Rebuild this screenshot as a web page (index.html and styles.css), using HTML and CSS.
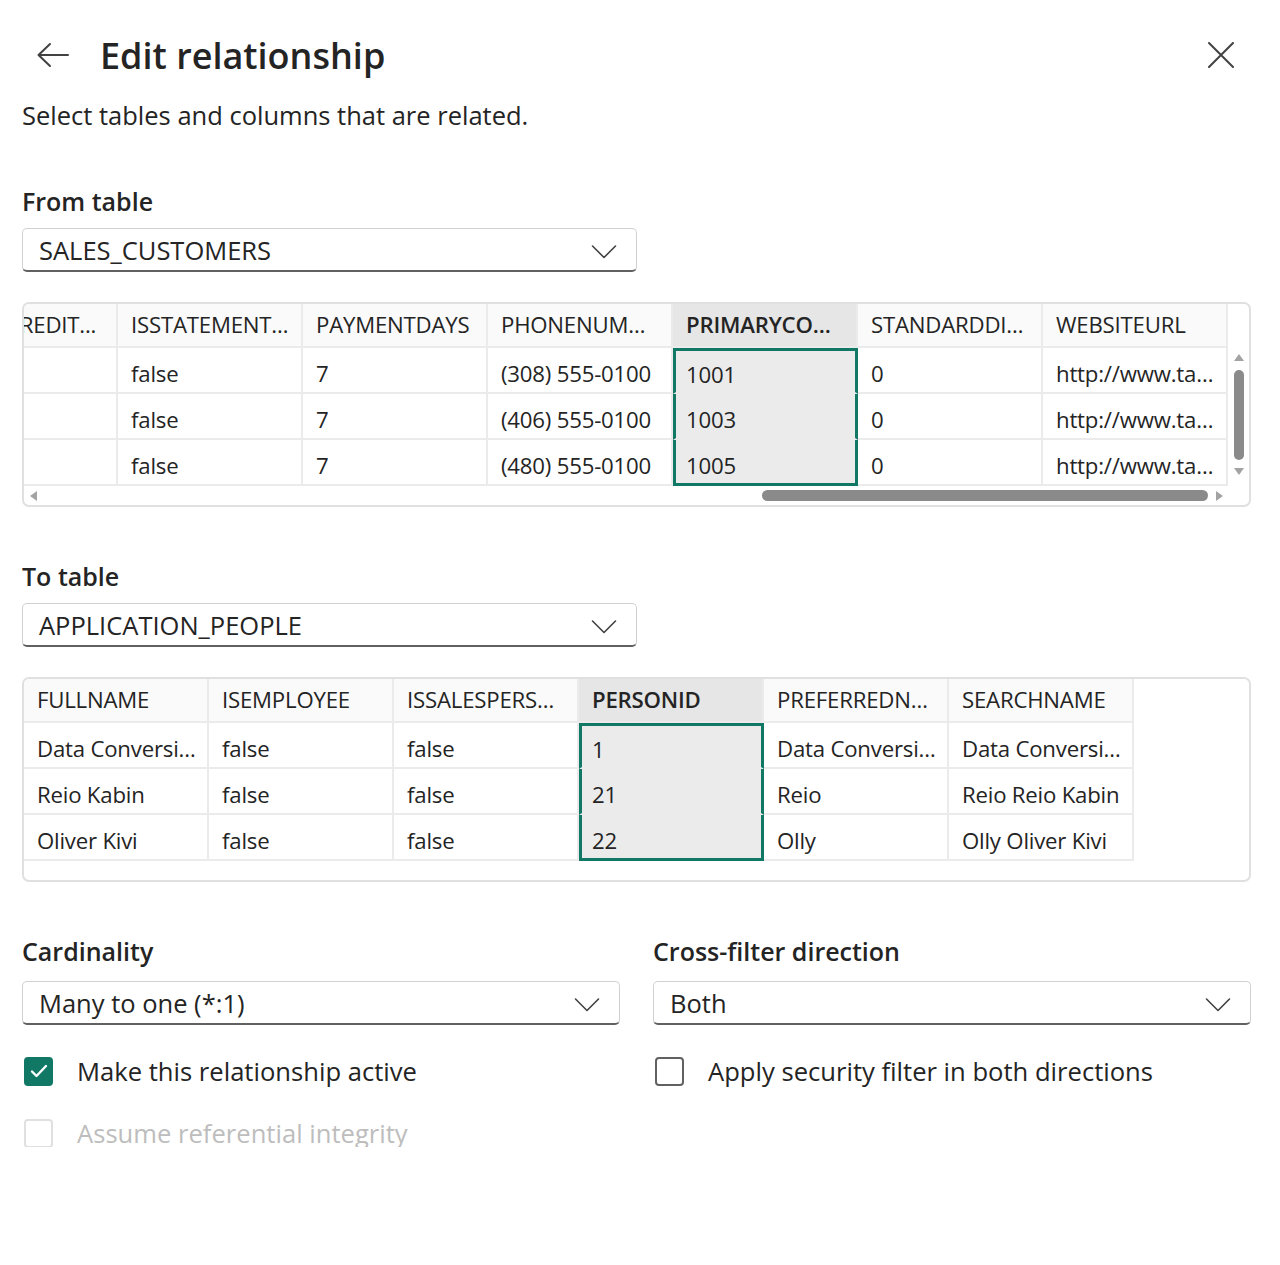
FILE: index.html
```html
<!DOCTYPE html>
<html lang="en">
<head>
<meta charset="utf-8">
<title>Edit relationship</title>
<link rel="stylesheet" href="styles.css">
</head>
<body>
<div class="panel">
  <div class="header">
    <button class="icon-btn back" aria-label="Back">
      <svg width="34" height="34" viewBox="0 0 34 34"><path d="M15 6 L3.5 17 L15 28 M3.5 17 H33" fill="none" stroke="#424242" stroke-width="2" stroke-linecap="round" stroke-linejoin="round"/></svg>
    </button>
    <h1 class="title">Edit relationship</h1>
    <button class="icon-btn close" aria-label="Close">
      <svg width="26" height="26" viewBox="0 0 26 26"><path d="M1 1 L25 25 M25 1 L1 25" fill="none" stroke="#424242" stroke-width="2" stroke-linecap="round"/></svg>
    </button>
  </div>
  <p class="subtitle">Select tables and columns that are related.</p>

  <div class="label first">From table</div>
  <div class="dropdown wide">
    <span>SALES_CUSTOMERS</span>
    <svg class="chev" width="26" height="16" viewBox="0 0 26 16"><path d="M1.5 2 L13 13.5 L24.5 2" fill="none" stroke="#424242" stroke-width="1.6" stroke-linecap="round" stroke-linejoin="round"/></svg>
  </div>

  <div class="grid-box">
    <div class="grid-top">
      <div class="grid t1">
        <div class="hd clip"><span>CREDIT...</span></div>
        <div class="hd roomy">ISSTATEMENTSENT</div>
        <div class="hd">PAYMENTDAYS</div>
        <div class="hd">PHONENUMBER</div>
        <div class="hd sel-h">PRIMARYCONTACTPERSONID</div>
        <div class="hd">STANDARDDISCOUNTPERCENTAGE</div>
        <div class="hd">WEBSITEURL</div>

        <div class="cell"></div>
        <div class="cell">false</div>
        <div class="cell">7</div>
        <div class="cell">(308) 555-0100</div>
        <div class="cell sel top">1001</div>
        <div class="cell">0</div>
        <div class="cell url">http://www.tailspintoys.com</div>

        <div class="cell"></div>
        <div class="cell">false</div>
        <div class="cell">7</div>
        <div class="cell">(406) 555-0100</div>
        <div class="cell sel">1003</div>
        <div class="cell">0</div>
        <div class="cell url">http://www.tailspintoys.com</div>

        <div class="cell"></div>
        <div class="cell">false</div>
        <div class="cell">7</div>
        <div class="cell">(480) 555-0100</div>
        <div class="cell sel bottom">1005</div>
        <div class="cell">0</div>
        <div class="cell url">http://www.tailspintoys.com</div>
      </div>
      <div class="vscroll">
        <span class="arr up"></span>
        <span class="vthumb"></span>
        <span class="arr down"></span>
      </div>
    </div>
    <div class="hscroll">
      <span class="arr left"></span>
      <span class="htrack"><span class="hthumb"></span></span>
      <span class="arr right"></span>
    </div>
  </div>

  <div class="label">To table</div>
  <div class="dropdown wide">
    <span>APPLICATION_PEOPLE</span>
    <svg class="chev" width="26" height="16" viewBox="0 0 26 16"><path d="M1.5 2 L13 13.5 L24.5 2" fill="none" stroke="#424242" stroke-width="1.6" stroke-linecap="round" stroke-linejoin="round"/></svg>
  </div>

  <div class="grid-box">
    <div class="grid t2">
      <div class="hd">FULLNAME</div>
      <div class="hd">ISEMPLOYEE</div>
      <div class="hd">ISSALESPERSON</div>
      <div class="hd sel-h">PERSONID</div>
      <div class="hd">PREFERREDNAME</div>
      <div class="hd">SEARCHNAME</div>

      <div class="cell">Data Conversion Only</div>
      <div class="cell">false</div>
      <div class="cell">false</div>
      <div class="cell sel top">1</div>
      <div class="cell">Data Conversion Only</div>
      <div class="cell">Data Conversion Only</div>

      <div class="cell">Reio Kabin</div>
      <div class="cell">false</div>
      <div class="cell">false</div>
      <div class="cell sel">21</div>
      <div class="cell">Reio</div>
      <div class="cell">Reio Reio Kabin</div>

      <div class="cell">Oliver Kivi</div>
      <div class="cell">false</div>
      <div class="cell">false</div>
      <div class="cell sel bottom">22</div>
      <div class="cell">Olly</div>
      <div class="cell">Olly Oliver Kivi</div>
    </div>
  </div>

  <div class="options">
    <div class="opt-col">
      <div class="label small-gap">Cardinality</div>
      <div class="dropdown">
        <span>Many to one (*:1)</span>
        <svg class="chev" width="26" height="16" viewBox="0 0 26 16"><path d="M1.5 2 L13 13.5 L24.5 2" fill="none" stroke="#424242" stroke-width="1.6" stroke-linecap="round" stroke-linejoin="round"/></svg>
      </div>
      <label class="check">
        <span class="box checked"><svg width="18" height="14" viewBox="0 0 18 14"><path d="M2 7.5 L6.5 12 L16 2" fill="none" stroke="#fff" stroke-width="2.4" stroke-linecap="round" stroke-linejoin="round"/></svg></span>
        <span>Make this relationship active</span>
      </label>
      <label class="check disabled">
        <span class="box"></span>
        <span>Assume referential integrity</span>
      </label>
    </div>
    <div class="opt-col">
      <div class="label small-gap">Cross-filter direction</div>
      <div class="dropdown">
        <span>Both</span>
        <svg class="chev" width="26" height="16" viewBox="0 0 26 16"><path d="M1.5 2 L13 13.5 L24.5 2" fill="none" stroke="#424242" stroke-width="1.6" stroke-linecap="round" stroke-linejoin="round"/></svg>
      </div>
      <label class="check">
        <span class="box"></span>
        <span>Apply security filter in both directions</span>
      </label>
    </div>
  </div>
</div>
</body>
</html>
```

FILE: styles.css
```css
* { box-sizing: border-box; }

html, body {
  margin: 0;
  background: #ffffff;
}

body {
  font-family: "Open Sans", "Noto Sans", "Liberation Sans", sans-serif;
  color: #242424;
}

.panel {
  padding: 30px 29px 0 22px;
  width: 1280px;
}

.header {
  display: flex;
  align-items: center;
  height: 50px;
}

.icon-btn {
  background: none;
  border: 0;
  padding: 0;
  display: flex;
  align-items: center;
  justify-content: center;
}

.back {
  margin-left: 13px;
  width: 34px;
  height: 34px;
}

.title {
  margin: 0 0 0 31px;
  font-size: 36px;
  font-weight: 600;
  flex: 1;
}

.close {
  width: 26px;
  height: 26px;
  margin-right: 17px;
}

.subtitle {
  margin: 18px 0 0 0;
  font-size: 25.5px;
  line-height: 34px;
}

.label {
  margin-top: 53px;
  font-size: 25px;
  line-height: 32px;
  font-weight: 600;
}

.dropdown {
  margin-top: 11px;
  height: 44px;
  width: 615px;
  border: 1px solid #d1d1d1;
  border-bottom: 2px solid #616161;
  border-radius: 5px;
  display: flex;
  align-items: center;
  justify-content: space-between;
  padding: 0 19px 0 16px;
  font-size: 25.5px;
}

.chev {
  margin-top: 4px;
}

.grid-box {
  margin-top: 30px;
  height: 205px;
  border: 2px solid #e0e0e0;
  border-radius: 7px;
  overflow: hidden;
  display: flex;
  flex-direction: column;
}

.grid-top {
  display: flex;
  height: 183px;
}

.grid {
  display: grid;
  grid-auto-rows: 46px;
  grid-template-rows: 44px;
  font-size: 22.2px;
  letter-spacing: -0.2px;
}

.t1 {
  grid-template-columns: 94px repeat(6, 185px);
}

.t2 {
  grid-template-columns: repeat(6, 185px);
}

.hd,
.cell {
  white-space: nowrap;
  overflow: hidden;
  text-overflow: ellipsis;
  display: block;
  border-right: 2px solid #ebebeb;
  border-bottom: 2px solid #ebebeb;
}

.hd {
  padding: 0 13px;
  background: #fafafa;
  line-height: 42px;
}

.hd.roomy {
  padding-right: 6px;
}

.cell {
  padding: 5px 6px 0 13px;
  background: #ffffff;
  line-height: 42px;
}

.cell.url {
  padding-right: 9px;
}

.hd.clip {
  padding: 0;
  text-overflow: clip;
}

.hd.clip span {
  display: inline-block;
  margin-left: -18px;
}

.hd.sel-h {
  background: #e6e6e6;
  font-weight: 600;
}

.cell.sel {
  background: #ebebeb;
  border-left: 3px solid #117865;
  border-right: 3px solid #117865;
  padding-left: 10px;
}

.cell.sel.top {
  border-top: 3px solid #117865;
  padding-top: 3px;
}

.cell.sel.bottom {
  border-bottom: 3px solid #117865;
}

.vscroll {
  width: 22px;
  padding-top: 50px;
  display: flex;
  flex-direction: column;
  align-items: center;
  margin-left: auto;
}

.arr {
  display: block;
  width: 0;
  height: 0;
}

.arr.up {
  border-left: 5px solid transparent;
  border-right: 5px solid transparent;
  border-bottom: 7px solid #a3a3a3;
}

.arr.down {
  border-left: 5px solid transparent;
  border-right: 5px solid transparent;
  border-top: 7px solid #a3a3a3;
}

.vthumb {
  display: block;
  width: 10px;
  height: 90px;
  margin: 9px 0 8px;
  border-radius: 5px;
  background: #8a8a8a;
}

.hscroll {
  height: 20px;
  display: flex;
  align-items: center;
  padding: 0 26px 0 6px;
}

.arr.left {
  border-top: 5px solid transparent;
  border-bottom: 5px solid transparent;
  border-right: 7px solid #a3a3a3;
}

.arr.right {
  border-top: 5px solid transparent;
  border-bottom: 5px solid transparent;
  border-left: 7px solid #a3a3a3;
}

.htrack {
  flex: 1;
  display: flex;
  padding: 0 8px;
}

.hthumb {
  display: block;
  margin-left: auto;
  width: 446px;
  height: 11px;
  border-radius: 6px;
  background: #8a8a8a;
}

.options {
  display: grid;
  grid-template-columns: 598px 598px;
  column-gap: 33px;
}

.options .label {
  margin-top: 53px;
}

.options .dropdown {
  width: 598px;
  margin-top: 14px;
}

.check {
  display: flex;
  align-items: center;
  height: 28px;
  margin-top: 32px;
  font-size: 25.6px;
}

.check + .check {
  margin-top: 34px;
}

.box {
  width: 29px;
  height: 29px;
  margin-left: 2px;
  margin-right: 24px;
  border: 2px solid #616161;
  border-radius: 4px;
  display: flex;
  align-items: center;
  justify-content: center;
  flex: none;
}

.box.checked {
  background: #117865;
  border-color: #117865;
}

.check.disabled {
  color: #bdbdbd;
}

.check.disabled .box {
  border-color: #e0e0e0;
}
```
